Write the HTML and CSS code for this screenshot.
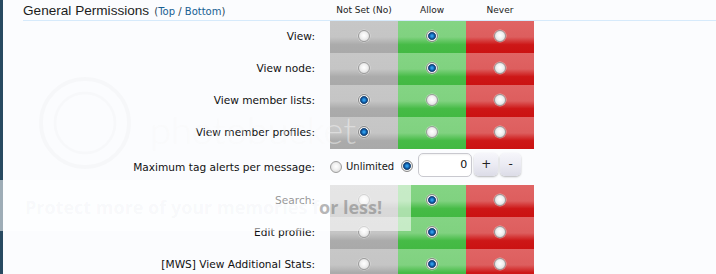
FILE: index.html
```html
<!DOCTYPE html>
<html>
<head>
<meta charset="utf-8">
<link rel="stylesheet" href="styles.css">
</head>
<body>
<div class="page">
  <div class="strip"></div>
  <div class="main">
    <div class="head">
      <div class="title"><span class="h">General Permissions</span> <span class="links">(<a class="lnk">Top</a> / <a class="lnk">Bottom</a>)</span></div>
      <div class="colh">Not Set (No)</div>
      <div class="colh">Allow</div>
      <div class="colh">Never</div>
    </div>

    <div class="row">
      <div class="label">View:</div>
      <div class="cell unset"><span class="radio"></span></div>
      <div class="cell allow"><span class="radio on"></span></div>
      <div class="cell never"><span class="radio"></span></div>
    </div>
    <div class="row">
      <div class="label">View node:</div>
      <div class="cell unset"><span class="radio"></span></div>
      <div class="cell allow"><span class="radio on"></span></div>
      <div class="cell never"><span class="radio"></span></div>
    </div>
    <div class="row">
      <div class="label">View member lists:</div>
      <div class="cell unset"><span class="radio on"></span></div>
      <div class="cell allow"><span class="radio"></span></div>
      <div class="cell never"><span class="radio"></span></div>
    </div>
    <div class="row">
      <div class="label">View member profiles:</div>
      <div class="cell unset"><span class="radio on"></span></div>
      <div class="cell allow"><span class="radio"></span></div>
      <div class="cell never"><span class="radio"></span></div>
    </div>

    <div class="row tagrow">
      <div class="label">Maximum tag alerts per message:</div>
      <div class="controls">
        <span class="radio"></span>
        <span class="unl">Unlimited</span>
        <span class="radio on r2"></span>
        <span class="num">0</span>
        <span class="btn plus">+</span>
        <span class="btn minus">-</span>
      </div>
    </div>

    <div class="row">
      <div class="label">Search:</div>
      <div class="cell unset"><span class="radio"></span></div>
      <div class="cell allow"><span class="radio on"></span></div>
      <div class="cell never"><span class="radio"></span></div>
    </div>
    <div class="row">
      <div class="label">Edit profile:</div>
      <div class="cell unset"><span class="radio"></span></div>
      <div class="cell allow"><span class="radio on"></span></div>
      <div class="cell never"><span class="radio"></span></div>
    </div>
    <div class="row">
      <div class="label">[MWS] View Additional Stats:</div>
      <div class="cell unset"><span class="radio"></span></div>
      <div class="cell allow"><span class="radio on"></span></div>
      <div class="cell never"><span class="radio"></span></div>
    </div>
  </div>
</div>

<div class="watermark">
  <svg class="wm-logo" width="110" height="110" viewBox="0 0 110 110">
    <circle cx="55" cy="55" r="44" fill="none" stroke="rgba(0,0,20,0.018)" stroke-width="4"/>
    <circle cx="55" cy="55" r="30" fill="none" stroke="rgba(0,0,20,0.015)" stroke-width="3"/>
  </svg>
  <span class="wm-text">photobucket</span>
</div>

<div class="overlay"><span class="ov-text"><span class="ov-faint">Protect more of your memories f</span><span class="ov-dark">or less!</span></span></div>
</body>
</html>
```

FILE: styles.css
```css
html, body {
  margin: 0;
  padding: 0;
  background: #fbfcfe;
}
body {
  width: 716px;
  height: 274px;
  overflow: hidden;
  position: relative;
  font-family: "DejaVu Sans", sans-serif;
  color: #141414;
}
.page {
  display: flex;
  min-height: 274px;
}
.strip {
  width: 3px;
  flex: none;
  background: #284a61;
}
.main {
  flex: 1;
  padding-left: 20px;
}
.head {
  display: grid;
  grid-template-columns: 307px 68px 68px 68px;
  height: 20px;
  border-bottom: 1px solid #d6eafb;
}
.title {
  white-space: nowrap;
  line-height: 20px;
}
.h {
  font-family: "Liberation Sans", sans-serif;
  font-size: 13.6px;
  color: #1c1c1c;
}
.links {
  font-size: 10px;
  color: #2b3f52;
}
.lnk {
  color: #176093;
}
.colh {
  font-size: 9px;
  text-align: center;
  line-height: 20px;
  color: #222;
}
.row {
  display: grid;
  grid-template-columns: 307px 68px 68px 68px;
  height: 32px;
}
.label {
  text-align: right;
  padding-right: 15px;
  font-size: 10.6px;
  line-height: 14px;
  padding-top: 8px;
  white-space: nowrap;
  color: #111;
}
.cell {
  display: flex;
  justify-content: center;
  align-items: flex-start;
  padding-top: 9px;
  box-sizing: border-box;
}
.unset {
  background: linear-gradient(to bottom, #c7c7c7 0%, #c5c5c5 50%, #ababab 74%, #a9a9a9 100%);
}
.allow {
  background: linear-gradient(to bottom, #84d484 0%, #80d280 50%, #46bb46 74%, #43b943 100%);
}
.never {
  background: linear-gradient(to bottom, #e06464 0%, #dd5e5e 50%, #cd1717 74%, #cb1212 100%);
}
.radio {
  display: inline-block;
  width: 12px;
  height: 12px;
  box-sizing: border-box;
  border-radius: 50%;
  border: 1px solid #9c9c9c;
  background: radial-gradient(circle at 50% 45%, #ffffff 0, #f2f2f2 40%, #cfcfcf 100%);
  box-shadow: 0 0 0 0.5px rgba(255,255,255,0.5);
}
.radio.on {
  border-color: #8a8a8a;
  background: radial-gradient(circle at 50% 50%, #45b0f0 0, #1b7fd0 1.6px, #0b3d78 3.2px, #3a5f86 3.7px, #f2f2f2 4.3px, #d4d4d4 100%);
}
.tagrow {
  height: 36px;
}
.tagrow .label {
  padding-top: 11px;
}
.controls {
  grid-column: 2 / span 3;
  display: flex;
  align-items: flex-start;
  padding-top: 4px;
  white-space: nowrap;
}
.controls .radio {
  margin-top: 8px;
}
.controls .r2 {
  margin-top: 7px;
}
.unl {
  font-size: 10px;
  line-height: 14px;
  margin-left: 4px;
  margin-top: 7px;
  margin-right: 7px;
}
.num {
  margin-left: 5px;
  width: 54px;
  height: 24px;
  box-sizing: border-box;
  border: 1px solid #c9c9cf;
  border-radius: 5px;
  background: #fff;
  box-shadow: inset 0 1px 2px rgba(0,0,0,0.06);
  text-align: right;
  padding-right: 4px;
  font-size: 11px;
  line-height: 22px;
  color: #111;
}
.btn {
  margin-left: 2px;
  height: 23px;
  border-radius: 5px;
  background: linear-gradient(to bottom, #f6f6fb 0%, #ebebf3 50%, #dcdce7 100%);
  box-shadow: 0 1px 2px rgba(0,0,0,0.28);
  text-align: center;
  font-size: 12px;
  line-height: 23px;
  color: #222;
}
.plus { width: 24px; }
.minus { width: 21px; }

.watermark {
  position: absolute;
  left: 30px;
  top: 68px;
  display: flex;
  align-items: center;
  pointer-events: none;
}
.wm-text {
  font-family: Lato, sans-serif;
  font-weight: 300;
  font-size: 38px;
  color: rgba(255,255,255,0.45);
  text-shadow: 0 0 1px rgba(0,0,30,0.025);
  margin-left: 10px;
  margin-top: 12px;
}
.overlay {
  position: absolute;
  left: 0;
  top: 180px;
  width: 411px;
  height: 51px;
  background: rgba(255,255,255,0.55);
}
.ov-text {
  position: absolute;
  left: 25px;
  top: 17px;
  font-family: "Open Sans", sans-serif;
  font-weight: 700;
  font-size: 18px;
  line-height: 20px;
  white-space: nowrap;
}
.ov-faint {
  color: rgba(120,120,130,0.05);
}
.ov-dark {
  color: rgba(120,120,120,0.55);
}
```
